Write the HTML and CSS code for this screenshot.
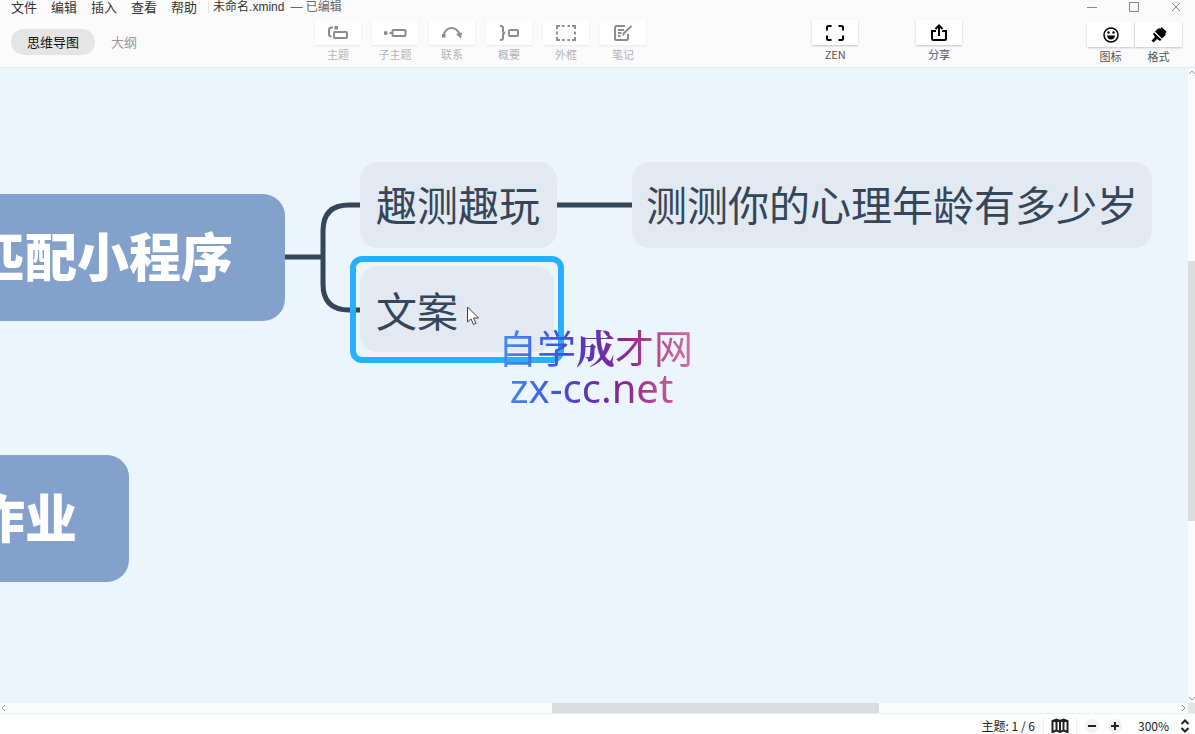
FILE: index.html
```html
<!DOCTYPE html>
<html lang="zh-CN">
<head>
<meta charset="utf-8">
<title>未命名.xmind</title>
<link rel="stylesheet" href="styles.css">
</head>
<body>
<div class="app">
  <header class="header">
    <div class="titlebar">
      <nav class="menu">
        <button>文件</button>
        <button>编辑</button>
        <button>插入</button>
        <button>查看</button>
        <button>帮助</button>
      </nav>
      <div class="doc"><span>未命名.xmind</span><span class="doc-state">— 已编辑</span></div>
      <div class="window-controls">
        <button aria-label="最小化"><svg width="10" height="10" viewBox="0 0 10 10"><path d="M0 5.500h10"/></svg></button>
        <button aria-label="最大化"><svg width="10" height="10" viewBox="0 0 10 10"><path d="M.5.5h9v9h-9z"/></svg></button>
        <button aria-label="关闭"><svg width="10" height="10" viewBox="0 0 10 10"><path d="M1 1l8 8M9 1L1 9"/></svg></button>
      </div>
    </div>
    <div class="toolbar">
      <div class="tabs">
        <button class="tab tab-active">思维导图</button>
        <button class="tab">大纲</button>
      </div>
      <div class="tools tools-muted">
        <button class="tool"><span class="tool-face"><svg width="22" height="18" viewBox="0 0 22 18"><path d="M6 3.500H4.500Q2 3.500 2 6v4q0 2.500 2.500 2.500"/><rect x="7" y="8" width="13" height="6" rx="1"/><path class="fill" d="M7.500 2H11v3.500H7.500z"/></svg></span><span>主题</span></button>
        <button class="tool"><span class="tool-face"><svg width="24" height="18" viewBox="0 0 24 18"><path d="M6.500 9H9"/><rect x="9.500" y="6" width="13" height="6" rx="1"/><path class="fill" d="M1 7.300h3.500v3.500H1z"/></svg></span><span>子主题</span></button>
        <button class="tool"><span class="tool-face"><svg width="22" height="18" viewBox="0 0 22 18"><path d="M3 10C6 2 15 2 18.500 10"/><path class="fill" d="M1 10h3.500v3.500H1zM15 10l6-1.500-1 6z"/></svg></span><span>联系</span></button>
        <button class="tool"><span class="tool-face"><svg width="22" height="18" viewBox="0 0 22 18"><path d="M2 2h1q2 0 2 2v3q0 2 2 2-2 0-2 2v3q0 2-2 2H2"/><rect x="11" y="6" width="9" height="6" rx="1"/></svg></span><span>概要</span></button>
        <button class="tool"><span class="tool-face"><svg width="22" height="18" viewBox="0 0 22 18"><path d="M2 5V2h3M17 2h3v3M20 13v3h-3M5 16H2v-3M7 2h2.500M12.500 2H15M7 16h2.500M12.500 16H15M2 7.500v3M20 7.500v3"/></svg></span><span>外框</span></button>
        <button class="tool"><span class="tool-face"><svg width="20" height="18" viewBox="0 0 20 18"><path d="M12 2H3.500Q2 2 2 3.500v11Q2 16 3.500 16h10q1.500 0 1.500-1.500V10M5 6h6M5 9h3.500M5 12h2.500M10 11.500l1-2.500 7.500-7"/></svg></span><span>笔记</span></button>
      </div>
      <div class="tools tools-center">
        <button class="tool"><span class="tool-face"><svg width="20" height="18" viewBox="0 0 20 18"><path d="M2 6.500V3.500Q2 2 3.500 2h3M13.500 2h3Q18 2 18 3.500v3M18 11.500v3q0 1.500-1.500 1.500h-3M6.500 16h-3Q2 16 2 14.500v-3"/></svg></span><span>ZEN</span></button>
        <button class="tool"><span class="tool-face"><svg width="18" height="18" viewBox="0 0 18 18"><path d="M6 7H2v7.500Q2 16 3.500 16h11q1.500 0 1.500-1.500V7h-4M9 12V2M5.500 5L9 1.500 12.500 5"/></svg></span><span>分享</span></button>
      </div>
      <div class="tools tools-panel">
        <button class="tool"><span class="tool-face"><svg width="18" height="18" viewBox="0 0 18 18"><circle cx="9" cy="9" r="7"/><path class="fill" d="M5 9.500h8q-.5 4-4 4t-4-4z"/><circle class="fill" cx="6.500" cy="6.500" r="1.200"/><circle class="fill" cx="11.500" cy="6.500" r="1.200"/></svg></span><span>图标</span></button>
        <button class="tool"><span class="tool-face"><svg width="18" height="18" viewBox="0 0 18 18"><path class="fill" d="M8 2.500l2.500 0 1-1.500L16.500 5.500 15.500 7v2l-3.500 3.500-7-7z"/><path class="fill" d="M4 6.500l7.500 7-1.500 1.500-3-2L3.500 16.500 1.500 14.500 5 11 3 8z"/></svg></span><span>格式</span></button>
      </div>
    </div>
  </header>

  <main class="workspace">
    <section class="canvas">
      <svg class="links" width="700" height="400" viewBox="0 0 700 400"><path d="M285 189h38M362 137h-13q-26 0-26 26v53q0 26 26 26h13M556 137h78"/></svg>
      <div class="node main-node main-first">匹配小程序</div>
      <div class="node main-node main-second">作业</div>
      <div class="node topic topic-first">趣测趣玩</div>
      <div class="node topic topic-detail">测测你的心理年龄有多少岁</div>
      <div class="node topic topic-copy">文案</div>
      <div class="selection"></div>
      <svg class="pointer" width="14" height="20" viewBox="0 0 14 20"><path d="M1.500 1v15l3.500-3 2.500 5.500 2.500-1.200L7.500 12h5z"/></svg>
      <div class="watermark"><div class="wm-name">自学<b>成</b>才网</div><div class="wm-site">zx-cc.net</div></div>
    </section>
    <div class="scroll-y">
      <svg width="7" height="8" viewBox="0 0 7 8"><path d="M1 6l3-3 3 3"/></svg>
      <div class="track-y"><div class="thumb-y"></div></div>
      <svg width="7" height="8" viewBox="0 0 7 8"><path d="M1 2l3 3 3-3"/></svg>
    </div>
    <div class="scroll-x">
      <svg width="8" height="10" viewBox="0 0 8 10"><path d="M5 2L2 5l3 3"/></svg>
      <div class="track-x"><div class="thumb-x"></div></div>
      <svg width="8" height="10" viewBox="0 0 8 10"><path d="M2 2l3 3-3 3"/></svg>
    </div>
    <div class="corner"></div>
  </main>

  <footer class="status">
    <span class="count">主题: 1 / 6</span>
    <button class="map" aria-label="导航图"><svg width="18" height="16" viewBox="0 0 18 16"><path d="M1.500 3l4-1.500L9 3l3.500-1.500 4 1.500v11l-4-1.500L9 14l-3.500-1.500-4 1.500zM5.500 1.500v11M9 3v11M12.500 1.500v11"/></svg></button>
    <button class="step" aria-label="缩小"><svg width="8" height="8" viewBox="0 0 8 8"><path d="M0 4h8"/></svg></button>
    <button class="step" aria-label="放大"><svg width="8" height="8" viewBox="0 0 8 8"><path d="M0 4h8M4 0v8"/></svg></button>
    <label class="zoom"><select aria-label="缩放"><option>300%</option></select><svg width="10" height="14" viewBox="0 0 10 14"><path d="M1.500 5L5 1.500 8.500 5M1.500 9L5 12.500 8.500 9"/></svg></label>
  </footer>
</div>
</body>
</html>
```

FILE: styles.css
```css
* { box-sizing: border-box; }
body {
  margin: 0;
  font-family: "Noto Sans CJK SC", sans-serif;
  font-size: 12px;
  color: #333;
}
button, select {
  font: inherit;
  color: inherit;
  border: 0;
  padding: 0;
  margin: 0;
  background: none;
}
svg { display: block; flex: none; fill: none; stroke: currentColor; }
.app { display: flex; flex-direction: column; height: 100vh; overflow: hidden; }

.header { flex: none; background: #fbfbfb; border-bottom: 1px solid #e6ebec; }
.titlebar { display: flex; align-items: center; height: 13px; padding: 0 14px 0 11px; line-height: 12px; }
.menu { display: flex; gap: 14px; font-size: 13px; }
.doc { display: flex; gap: 6px; margin-left: 11px; padding-left: 4px; border-left: 1px solid #e4e4e4; font-family: "Liberation Sans", "Noto Sans CJK SC", sans-serif; }
.doc-state { color: #666; }
.window-controls { display: flex; gap: 32px; margin-left: auto; color: #888; }

.toolbar { display: flex; align-items: flex-start; padding: 7px 13px 3px 0; }
.tabs { display: flex; align-items: center; flex: 0 0 315px; padding: 9px 0 0 11px; gap: 16px; font-size: 13px; }
.tab { height: 26px; line-height: 26px; color: #999; }
.tab-active { padding: 0 16px; border-radius: 13px; background: #e5e5e5; color: #111; }
.tools { display: flex; gap: 11px; }
.tool { display: flex; flex-direction: column; align-items: center; gap: 2px; width: 46px; font-size: 11px; line-height: 15px; color: #555; }
.tool-face {
  display: flex; align-items: center; justify-content: center;
  width: 100%; height: 25px;
  background: #fff;
  color: #000;
  box-shadow: 0 1px 2px rgba(0, 0, 0, .22);
}
.tool svg { stroke-width: 2; }
.tool .fill { fill: currentColor; stroke: none; }
.tools-muted .tool { color: #b4b4b4; }
.tools-muted .tool-face { color: #8c8c8c; box-shadow: 0 1px 2px rgba(0, 0, 0, .08); }
.tools-center { flex: 1; gap: 58px; }
.tools-center::before { content: ""; flex: 4; margin-right: -58px; }
.tools-center::after { content: ""; flex: 3; margin-left: -58px; }
.tools-panel { gap: 1px; padding-top: 2px; }
.tools-panel .tool { width: 47px; }
.tools-panel svg { stroke-width: 1.5; }

.workspace { flex: 1; min-height: 0; display: grid; grid-template: minmax(0, 1fr) 10px / minmax(0, 1fr) 7px; background: #fafcfc; }
.canvas { position: relative; overflow: hidden; background: #edf5fc; }
.node { position: absolute; white-space: nowrap; }
.links { position: absolute; left: 0; top: 0; stroke: #35455a; stroke-width: 5; }
.main-node { left: -79px; padding: 22px 52px 28px; border-radius: 22px; background: #83a1cb; color: #fff; font-size: 52px; line-height: 77px; font-weight: 900; }
.main-first { top: 126px; }
.main-second { top: 387px; }
.topic { padding: 12px 16px 16px; border-radius: 18px; background: #e2e9f1; color: #35455a; font-size: 41px; line-height: 58px; }
.topic-first { left: 360px; top: 94px; min-width: 197px; }
.topic-detail { left: 632px; top: 94px; padding-left: 14px; padding-right: 14px; }
.topic-copy { left: 360px; top: 198px; min-width: 194px; padding-top: 14px; padding-bottom: 14px; }
.selection { position: absolute; left: 350px; top: 188px; width: 214px; height: 107px; border: 6px solid #26b0ff; border-radius: 12px; }
.pointer { position: absolute; left: 466px; top: 238px; fill: #fff; stroke: #444; }
.watermark {
  position: absolute; left: 498px; top: 256px;
  text-align: center;
  white-space: nowrap;
  color: transparent;
  background: linear-gradient(90deg, #4a90ec, #3d5be0 28%, #5a35b8 45%, #8a2590 65%, #b04090 78%, #d070a4);
  background-clip: text;
  -webkit-background-clip: text;
}
.wm-name { font-size: 39px; line-height: 44px; }
.wm-name b { font-family: "Noto Serif CJK SC", "Noto Sans CJK SC", serif; }
.wm-site { font-family: "Noto Sans", sans-serif; font-size: 40px; line-height: 40px; padding-right: 8px; }

.scroll-y { display: flex; flex-direction: column; color: #999; }
.track-y { flex: 1; display: flex; flex-direction: column; }
.track-y::before { content: ""; flex: 185; }
.thumb-y { flex: 260; background: #dadddd; }
.track-y::after { content: ""; flex: 174; }
.scroll-x { display: flex; color: #999; }
.track-x { flex: 1; display: flex; }
.track-x::before { content: ""; flex: 544; }
.thumb-x { flex: 327; background: #dadddd; }
.track-x::after { content: ""; flex: 301; }
.corner { background: #e2e4e4; }

.status { flex: none; display: flex; align-items: center; justify-content: flex-end; height: 21px; padding: 3px 5px 0 0; border-top: 1px solid #eee; background: #fff; color: #222; overflow: hidden; }
.map { margin: 0 8px; padding: 0 7px; border: solid #eee; border-width: 0 1px; }
.map svg { stroke-width: 2; }
.step { display: flex; align-items: center; justify-content: center; width: 14px; height: 14px; margin-right: 9px; border-radius: 7px; background: #f1f1f1; }
.step svg { stroke-width: 2; }
.zoom { display: flex; align-items: center; gap: 10px; margin-left: 7px; }
.zoom select { appearance: none; line-height: 16px; }
.zoom svg { stroke-width: 2; }
```
